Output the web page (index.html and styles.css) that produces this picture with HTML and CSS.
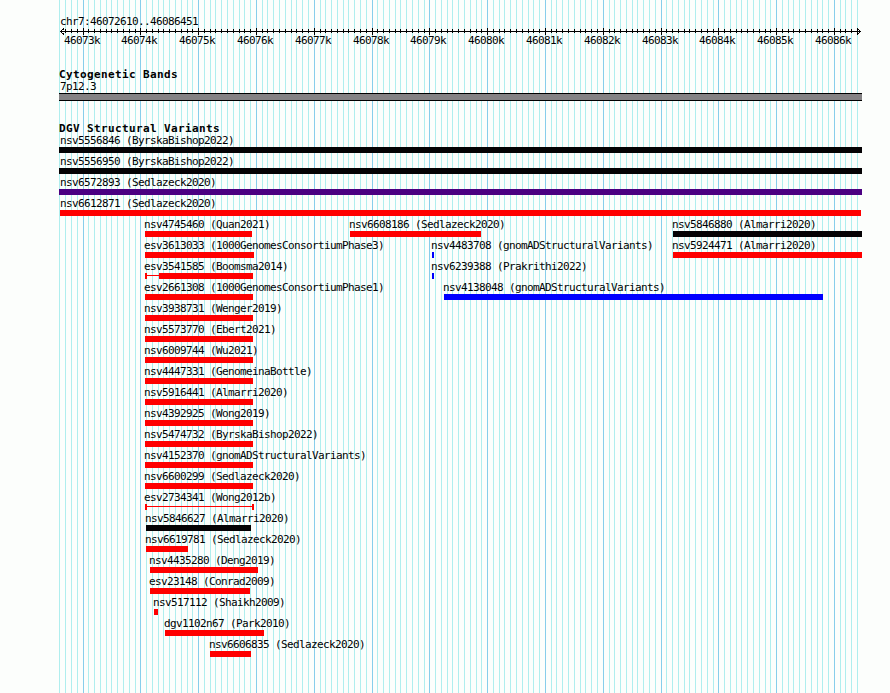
FILE: index.html
```html
<!DOCTYPE html>
<html lang="en">
<head>
    <meta charset="UTF-8">
    <title>chr7:46072610..46086451</title>
    <link rel="stylesheet" href="styles.css">
</head>
<body>
  <div class="browser">
    <svg class="gridlines" id="gridlines" width="890" height="693" shape-rendering="crispEdges"></svg>

    <header class="ruler">
      <div class="region">chr7:46072610..46086451</div>
      <svg class="scale" id="scale" width="890" height="7" shape-rendering="crispEdges"></svg>
      <div class="ticks" id="ticks"></div>
    </header>

    <section class="track cytobands">
      <h2>Cytogenetic Bands</h2>
      <div class="label">7p12.3</div>
      <div class="band"></div>
    </section>

    <section class="track variants">
      <h2>DGV Structural Variants</h2>
      <div id="variants"></div>
    </section>
  </div>

  <script src="script.js"></script>
</body>
</html>
```
FILE: styles.css
```css
html, body {
    margin: 0;
    padding: 0;
    background-color: #fcfefc;
}

.browser {
    position: relative;
    width: 890px;
    height: 693px;
    overflow: hidden;
    color: #000;
    font-family: "DejaVu Sans Mono", monospace;
    font-size: 11px;
    line-height: 14px;
    letter-spacing: -0.622px;
    white-space: nowrap;
}

/* Lines behind all tracks */
.gridlines {
    position: absolute;
    top: 0;
    left: 0;
}

.gridlines .minor {
    fill: #afeeee;
}

.gridlines .major {
    fill: #87ceeb;
}

/* Ruler */
.ruler {
    position: relative;
    padding-top: 15px;
}

.region {
    margin-left: 60px;
    height: 13px;
}

.scale {
    display: block;
}

.scale path {
    fill: none;
    stroke: #000;
}

.ticks {
    display: grid;
    height: 12px;
    margin-top: -1px;
}

.ticks span {
    grid-area: 1 / 1;
}

/* Tracks */
.track {
    position: relative;
}

.track h2 {
    margin: 0 0 0 59px;
    height: 12px;
    font-size: 11px;
    line-height: 14px;
    font-weight: bold;
    letter-spacing: 0.378px;
}

.cytobands {
    margin-top: 22px;
}

.cytobands .label {
    margin-left: 60px;
    height: 13px;
}

.band {
    box-sizing: border-box;
    width: 803px;
    height: 8px;
    margin-left: 59px;
    background-color: #848284;
    border-top: 1px solid #000;
    border-bottom: 1px solid #000;
}

.variants {
    margin-top: 21px;
}

.row {
    display: grid;
    height: 21px;
}

.feature {
    grid-area: 1 / 1;
    justify-self: start;
}

.feature .name {
    display: block;
    height: 13px;
    margin-left: -1px;
}

.feature .glyph {
    display: block;
    height: 6px;
}

/* features that start at the left edge of the region */
.feature.edge .name {
    margin-left: 0;
}

.feature.full .name {
    margin-left: 1px;
}

.red {
    fill: #ff0000;
}

.black {
    fill: #040204;
}

.indigo {
    fill: #4b0082;
}

.blue {
    fill: #0000ff;
}
```
FILE: script.js
```js
const START = 46072610;
const END = 46086451;
const LEFT = 60;
const WIDTH = 800;

function toX(pos) {
  return Math.round(LEFT + (pos - START) * WIDTH / (END - START));
}

// [name, color, [start, end] blocks]
const rows = [
  [["nsv5556846 (ByrskaBishop2022)", "black", [59, 862]]],
  [["nsv5556950 (ByrskaBishop2022)", "black", [59, 862]]],
  [["nsv6572893 (Sedlazeck2020)", "indigo", [59, 862]]],
  [["nsv6612871 (Sedlazeck2020)", "red", [60, 861]]],
  [["nsv4745460 (Quan2021)", "red", [145, 252]], ["nsv6608186 (Sedlazeck2020)", "red", [350, 481]], ["nsv5846880 (Almarri2020)", "black", [673, 862]]],
  [["esv3613033 (1000GenomesConsortiumPhase3)", "red", [145, 254]], ["nsv4483708 (gnomADStructuralVariants)", "blue", [432, 434]], ["nsv5924471 (Almarri2020)", "red", [673, 862]]],
  [["esv3541585 (Boomsma2014)", "red", [145, 147], [159, 253]], ["nsv6239388 (Prakrithi2022)", "blue", [432, 434]]],
  [["esv2661308 (1000GenomesConsortiumPhase1)", "red", [145, 253]], ["nsv4138048 (gnomADStructuralVariants)", "blue", [444, 823]]],
  [["nsv3938731 (Wenger2019)", "red", [145, 253]]],
  [["nsv5573770 (Ebert2021)", "red", [145, 253]]],
  [["nsv6009744 (Wu2021)", "red", [145, 253]]],
  [["nsv4447331 (GenomeinaBottle)", "red", [145, 253]]],
  [["nsv5916441 (Almarri2020)", "red", [145, 253]]],
  [["nsv4392925 (Wong2019)", "red", [145, 253]]],
  [["nsv5474732 (ByrskaBishop2022)", "red", [145, 253]]],
  [["nsv4152370 (gnomADStructuralVariants)", "red", [145, 253]]],
  [["nsv6600299 (Sedlazeck2020)", "red", [145, 253]]],
  [["esv2734341 (Wong2012b)", "red", [145, 147], [252, 254]]],
  [["nsv5846627 (Almarri2020)", "black", [146, 251]]],
  [["nsv6619781 (Sedlazeck2020)", "red", [146, 188]]],
  [["nsv4435280 (Deng2019)", "red", [150, 258]]],
  [["esv23148 (Conrad2009)", "red", [150, 250]]],
  [["nsv517112 (Shaikh2009)", "red", [154, 158]]],
  [["dgv1102n67 (Park2010)", "red", [165, 264]]],
  [["nsv6606835 (Sedlazeck2020)", "red", [210, 251]]]
];

let grid = "";
let scale = "M60 3.5H861M64 0.5L60.5 3.5L64 6.5M857 0.5L860.5 3.5L857 6.5";
let ticks = "";

for (let pos = 46072600; pos <= 46086400; pos += 100) {
  const x = toX(pos);
  const major = pos % 1000 === 0;
  grid += `<rect class="${major ? "major" : "minor"}" x="${x}" y="0" width="1" height="693"/>`;
  if (pos > START) {
    scale += major ? `M${x + 0.5} 0V7` : `M${x + 0.5} 1V5`;
  }
  if (major) {
    ticks += `<span style="margin-left: ${x - 19}px">${pos / 1000}k</span>`;
  }
}

document.getElementById("gridlines").innerHTML = grid;
document.getElementById("scale").innerHTML = `<path d="${scale}"/>`;
document.getElementById("ticks").innerHTML = ticks;

function drawFeature([name, color, ...blocks]) {
  const start = blocks[0][0];
  const width = blocks[blocks.length - 1][1] - start;
  const rects = blocks.map(([a, b]) => `<rect x="${a - start}" y="0" width="${b - a}" height="6"/>`).join("");
  const link = blocks.length > 1 ? `<rect x="0" y="2" width="${width}" height="1"/>` : "";
  let edge = "";
  if (start < LEFT) edge = " full";
  else if (start === LEFT) edge = " edge";
  return `
    <div class="feature${edge}" style="margin-left: ${start}px">
      <span class="name">${name}</span>
      <svg class="glyph ${color}" width="${width}" height="6" shape-rendering="crispEdges">${rects}${link}</svg>
    </div>`;
}

document.getElementById("variants").innerHTML = rows
  .map(row => `<div class="row">${row.map(drawFeature).join("")}</div>`)
  .join("");
```
